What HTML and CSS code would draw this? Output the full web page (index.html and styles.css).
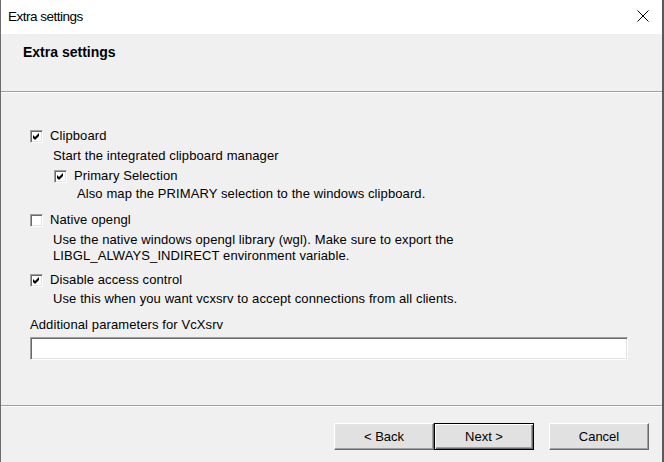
FILE: index.html
```html
<!DOCTYPE html>
<html>
<head>
<meta charset="utf-8">
<link rel="stylesheet" href="styles.css">
</head>
<body>
<div class="window">
  <div class="titlebar">
    <span class="title">Extra settings</span>
    <svg class="close" width="12" height="12" viewBox="0 0 12 12"><path d="M0.5 0.5 L11.5 11.5 M11.5 0.5 L0.5 11.5" stroke="#000" stroke-width="1" fill="none"/></svg>
  </div>
  <div class="header">
    <div class="header-title">Extra settings</div>
  </div>
  <div class="sep"></div>
  <div class="content">
    <div class="row r-clip">
      <span class="cb"><svg width="7" height="7" viewBox="0 0 7 7"><polygon points="0,2 2,4 6,0 6,3 2,7 0,5" fill="#000"/></svg></span>
      <span class="label">Clipboard</span>
    </div>
    <div class="desc d1">Start the integrated clipboard manager</div>
    <div class="row sub r-prim">
      <span class="cb"><svg width="7" height="7" viewBox="0 0 7 7"><polygon points="0,2 2,4 6,0 6,3 2,7 0,5" fill="#000"/></svg></span>
      <span class="label">Primary Selection</span>
    </div>
    <div class="desc sub d2">Also map the PRIMARY selection to the windows clipboard.</div>
    <div class="row r-gl">
      <span class="cb"></span>
      <span class="label">Native opengl</span>
    </div>
    <div class="desc d3">Use the native windows opengl library (wgl). Make sure to export the<br>LIBGL_ALWAYS_INDIRECT environment variable.</div>
    <div class="row r-acl">
      <span class="cb"><svg width="7" height="7" viewBox="0 0 7 7"><polygon points="0,2 2,4 6,0 6,3 2,7 0,5" fill="#000"/></svg></span>
      <span class="label">Disable access control</span>
    </div>
    <div class="desc d4">Use this when you want vcxsrv to accept connections from all clients.</div>
    <div class="plain l-add">Additional parameters for VcXsrv</div>
    <div class="input"></div>
  </div>
  <div class="sep sep2"></div>
  <div class="footer">
    <button class="btn">&lt; Back</button>
    <button class="btn default">Next &gt;</button>
    <button class="btn cancel">Cancel</button>
  </div>
</div>
</body>
</html>
```
FILE: styles.css
```css
html, body {
  margin: 0;
  padding: 0;
  width: 664px;
  height: 462px;
  overflow: hidden;
  background: #f0f0f0;
  font-family: "Liberation Sans", Arial, sans-serif;
  font-size: 13px;
  color: #000;
}
.window {
  width: 664px;
  height: 462px;
  box-sizing: border-box;
  border-left: 1px solid #6c6c6c;
  border-right: 2px solid #5a5a5a;
  background: #f0f0f0;
  display: flex;
  flex-direction: column;
  letter-spacing: 0.1px;
}
.titlebar {
  height: 34px;
  background: #fff;
  display: flex;
  align-items: center;
  justify-content: space-between;
  padding-left: 7px;
  padding-right: 13px;
  flex: none;
}
.title {
  font-size: 13.5px;
  letter-spacing: -0.5px;
  line-height: 16px;
  margin-top: -1px;
}
.close {
  margin-top: -3px;
  display: block;
}
.header {
  height: 57px;
  padding: 10px 0 0 22px;
  box-sizing: border-box;
  flex: none;
}
.header-title {
  font-weight: bold;
  font-size: 14px;
  letter-spacing: 0;
  line-height: 16px;
}
.sep {
  height: 1px;
  background: #a0a0a0;
  border-bottom: 1px solid #fff;
  flex: none;
}
.content {
  padding-left: 29px;
  padding-top: 35px;
  height: 312px;
  box-sizing: border-box;
  flex: none;
}
.row {
  display: flex;
  align-items: center;
  height: 16px;
  line-height: 16px;
}
.row.sub { padding-left: 24px; }
.cb {
  width: 13px;
  height: 13px;
  box-sizing: border-box;
  background: #fff;
  border: 1px solid;
  border-color: #a0a0a0 #fff #fff #a0a0a0;
  box-shadow: inset 1px 1px #696969, inset -1px -1px #e3e3e3;
  display: flex;
  align-items: center;
  justify-content: center;
  margin-right: 7px;
  flex: none;
}
.cb svg { display: block; }
.desc {
  line-height: 16px;
  padding-left: 23px;
}
.desc.sub { padding-left: 47px; }
.d1 { margin-top: 4px; }
.r-prim { margin-top: 4px; }
.d2 { margin-top: 2px; }
.r-gl { margin-top: 10px; }
.d3 { margin-top: 4px; }
.r-acl { margin-top: 8px; }
.d4 { margin-top: 3px; }
.plain { line-height: 16px; }
.l-add { margin-top: 10px; }
.input {
  margin-top: 4px;
  width: 598px;
  height: 23px;
  box-sizing: border-box;
  background: #fff;
  border: 1px solid;
  border-color: #a0a0a0 #fff #fff #a0a0a0;
  box-shadow: inset 1px 1px #696969, inset -1px -1px #e3e3e3;
}
.footer {
  display: flex;
  justify-content: flex-end;
  padding: 16px 13px 0 0;
  flex: 1;
}
.btn {
  width: 100px;
  height: 27px;
  box-sizing: border-box;
  background: #e1e1e1;
  font-family: "Liberation Sans", Arial, sans-serif;
  font-size: 13px;
  color: #000;
  border: 1px solid;
  border-color: #fff #696969 #696969 #fff;
  box-shadow: inset -1px -1px #a0a0a0, inset 1px 1px #e3e3e3;
  padding: 0;
  margin: 0;
}
.btn.default {
  border: 1px solid #000;
  box-shadow: inset 1px 1px #fff, inset -1px -1px #696969, inset -2px -2px #a0a0a0;
}
.btn.cancel { margin-left: 15px; }
```
